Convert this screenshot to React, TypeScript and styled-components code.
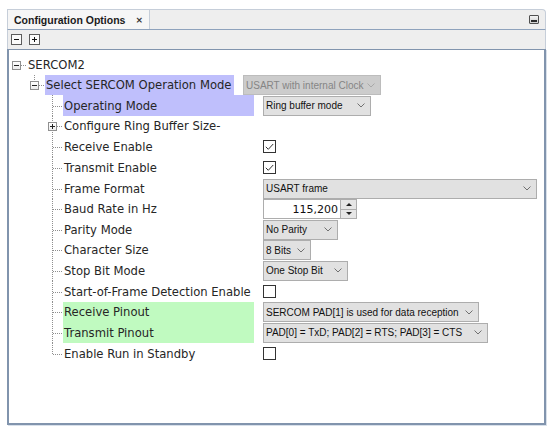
import React from 'react';
import styled, { createGlobalStyle } from 'styled-components';

const Global = createGlobalStyle`
  html, body { margin: 0; padding: 0; background: #ffffff; }
  body { font-family: "DejaVu Sans", sans-serif; }
`;

const Page = styled.div`
  width: 553px;
  height: 434px;
  box-sizing: border-box;
  padding: 9px 0 0 7px;
  background: #ffffff;
`;

const Frame = styled.div`
  width: 539px;
  height: 416px;
  display: flex;
  flex-direction: column;
`;

const TabStrip = styled.div`
  height: 19px;
  display: flex;
  align-items: stretch;
  justify-content: space-between;
  background: #eeeeee;
  border: 1px solid #c6ced9;
  border-bottom: 1px solid #8ea2bc;
  border-top-right-radius: 4px;
`;

const Tab = styled.div`
  display: flex;
  align-items: center;
  gap: 10px;
  padding: 0 6px;
  white-space: nowrap;
  background: #f6f6f6;
  border-right: 1px solid #c6ced9;
  font: bold 10.5px "Liberation Sans", Arial, sans-serif;
  color: #1b1b1b;
`;

const Close = styled.span`
  font: bold 9px "DejaVu Sans", sans-serif;
  color: #333;
`;

const MinBox = styled.div`
  align-self: center;
  margin-right: 6px;
  width: 10px;
  height: 9px;
  box-sizing: border-box;
  border: 1px solid #505050;
  border-radius: 1px;
  background: linear-gradient(#f4f4f4, #cfcfcf);
  display: flex;
  align-items: flex-end;
  justify-content: center;
  padding-bottom: 1px;
  &::after {
    content: "";
    width: 6px;
    height: 2px;
    background: #2a2a2a;
  }
`;

const Toolbar = styled.div`
  height: 19px;
  display: flex;
  align-items: center;
  gap: 7px;
  padding-left: 3px;
  background: #eeeeee;
  border-left: 1px solid #c6ced9;
  border-right: 1px solid #c6ced9;
`;

const ToolButton = styled.div<{ $plus?: boolean }>`
  width: 11px;
  height: 11px;
  box-sizing: border-box;
  border: 1px solid #5c5c5c;
  background: #fbfbfb;
  position: relative;
  &::before {
    content: "";
    position: absolute;
    left: 2px;
    top: 4px;
    width: 5px;
    height: 1px;
    background: #111;
  }
  &::after {
    content: "";
    display: ${(p) => (p.$plus ? 'block' : 'none')};
    position: absolute;
    left: 4px;
    top: 2px;
    width: 1px;
    height: 5px;
    background: #111;
  }
`;

const Content = styled.div`
  flex: 1;
  background: #ffffff;
  border: 2px solid #8194ad;
  border-top: 1px solid #8194ad;
  box-shadow: 1px 1px 0 #d8e0ea;
  padding-top: 5px;
  display: flex;
  flex-direction: column;
`;

const Row = styled.div<{ $h: number }>`
  height: ${(p) => p.$h}px;
  display: flex;
  align-items: stretch;
`;

const Indent = styled.div`
  width: 18px;
  flex: none;
`;

const dots = (dir: string) =>
  `repeating-linear-gradient(${dir}, #8f8f8f 0 1px, transparent 1px 2px)`;

const Branch = styled.div<{ $kind: 'root' | 'mid' | 'last' }>`
  width: 18px;
  flex: none;
  position: relative;
  &::before {
    content: "";
    display: ${(p) => (p.$kind === 'root' ? 'none' : 'block')};
    position: absolute;
    left: 7px;
    top: 0;
    width: 1px;
    height: ${(p) => (p.$kind === 'last' ? '50%' : '100%')};
    background: ${dots('to bottom')};
  }
  &::after {
    content: "";
    position: absolute;
    left: 8px;
    top: 50%;
    width: 9px;
    height: 1px;
    background: ${dots('to right')};
  }
`;

const Expander = styled.div<{ $open: boolean }>`
  position: absolute;
  z-index: 1;
  left: 3px;
  top: calc(50% - 4px);
  width: 9px;
  height: 9px;
  box-sizing: border-box;
  border: 1px solid #909090;
  background: linear-gradient(#ffffff, #ececec);
  &::before {
    content: "";
    position: absolute;
    left: 1px;
    top: 3px;
    width: 5px;
    height: 1px;
    background: #222;
  }
  &::after {
    content: "";
    display: ${(p) => (p.$open ? 'none' : 'block')};
    position: absolute;
    left: 3px;
    top: 1px;
    width: 1px;
    height: 5px;
    background: #222;
  }
`;

const Label = styled.div<{ $w?: number; $hl?: 'blue' | 'green' }>`
  ${(p) => (p.$w ? `width: ${p.$w}px;` : '')}
  flex: none;
  box-sizing: border-box;
  padding: 0 1px;
  display: flex;
  align-items: center;
  white-space: nowrap;
  font: 11.6px "DejaVu Sans", sans-serif;
  color: #262626;
  background: ${(p) =>
    p.$hl === 'blue' ? '#bfbffc' : p.$hl === 'green' ? '#c0fac0' : 'transparent'};
`;

const Value = styled.div`
  margin-left: 9px;
  display: flex;
  align-items: center;
`;

const ComboBox = styled.div<{ $w: number; $disabled?: boolean }>`
  width: ${(p) => p.$w}px;
  height: 20px;
  box-sizing: border-box;
  display: flex;
  align-items: center;
  padding: 0 5px 0 2px;
  border: 1px solid ${(p) => (p.$disabled ? '#bcbcbc' : '#adadad')};
  background: ${(p) => (p.$disabled ? '#cccccc' : '#e1e1e1')};
  color: ${(p) => (p.$disabled ? '#858585' : '#111111')};
  font: 10px "Liberation Sans", Arial, sans-serif;
  white-space: nowrap;
  overflow: hidden;
`;

const ComboText = styled.span`
  flex: 1;
  min-width: 0;
`;

const ChevronWrap = styled.span`
  flex: none;
  display: flex;
  margin-left: 2px;
`;

const Chevron = ({ color }: { color: string }) => (
  <ChevronWrap>
    <svg width="8" height="5" viewBox="0 0 8 5">
      <path d="M0.5 0.5 L4 4 L7.5 0.5" fill="none" stroke={color} strokeWidth="1" />
    </svg>
  </ChevronWrap>
);

const Combo = ({ w, text, disabled }: { w: number; text: string; disabled?: boolean }) => (
  <ComboBox $w={w} $disabled={disabled}>
    <ComboText>{text}</ComboText>
    <Chevron color={disabled ? '#a8a8a8' : '#707070'} />
  </ComboBox>
);

const CheckBox = styled.div`
  width: 13px;
  height: 13px;
  box-sizing: border-box;
  border: 1px solid #333333;
  background: #ffffff;
  display: flex;
  align-items: center;
  justify-content: center;
`;

const Check = ({ on }: { on?: boolean }) => (
  <CheckBox>
    {on && (
      <svg width="9" height="8" viewBox="0 0 9 8">
        <path d="M0.8 3.8 L3.3 6.3 L8.2 1" fill="none" stroke="#333" strokeWidth="1" />
      </svg>
    )}
  </CheckBox>
);

const Spinner = styled.div`
  width: 94px;
  height: 20px;
  box-sizing: border-box;
  display: flex;
  border: 1px solid #adadad;
  background: #ffffff;
`;

const SpinText = styled.div`
  flex: 1;
  display: flex;
  align-items: center;
  justify-content: flex-end;
  padding-right: 2px;
  font: 11px "DejaVu Sans", sans-serif;
  color: #111;
`;

const SpinButtons = styled.div`
  width: 15px;
  display: flex;
  flex-direction: column;
  border-left: 1px solid #adadad;
`;

const SpinButton = styled.div<{ $down?: boolean }>`
  flex: 1;
  display: flex;
  align-items: center;
  justify-content: center;
  background: #e6e6e6;
  border-top: ${(p) => (p.$down ? '1px solid #adadad' : 'none')};
  &::after {
    content: "";
    border-left: 3px solid transparent;
    border-right: 3px solid transparent;
    ${(p) => (p.$down ? 'border-top: 3px solid #222;' : 'border-bottom: 3px solid #222;')}
  }
`;

type Kind = 'root' | 'mid' | 'last';
type Node = {
  label: string;
  level: number;
  kind: Kind;
  h: number;
  exp?: 'open' | 'closed';
  w?: number;
  hl?: 'blue' | 'green';
  value?: React.ReactNode;
};

const L2 = 191;

const nodes: Node[] = [
  { label: 'SERCOM2', level: 0, kind: 'root', h: 20, exp: 'open' },
  {
    label: 'Select SERCOM Operation Mode', level: 1, kind: 'last', h: 20, exp: 'open', w: 189, hl: 'blue',
    value: <Combo w={138} text="USART with internal Clock" disabled />,
  },
  { label: 'Operating Mode', level: 2, kind: 'mid', h: 21, w: L2, hl: 'blue', value: <Combo w={108} text="Ring buffer mode" /> },
  { label: 'Configure Ring Buffer Size-', level: 2, kind: 'mid', h: 20, exp: 'closed', w: L2 },
  { label: 'Receive Enable', level: 2, kind: 'mid', h: 21, w: L2, value: <Check on /> },
  { label: 'Transmit Enable', level: 2, kind: 'mid', h: 21, w: L2, value: <Check on /> },
  { label: 'Frame Format', level: 2, kind: 'mid', h: 21, w: L2, value: <Combo w={274} text="USART frame" /> },
  {
    label: 'Baud Rate in Hz', level: 2, kind: 'mid', h: 20, w: L2,
    value: (
      <Spinner>
        <SpinText>115,200</SpinText>
        <SpinButtons>
          <SpinButton />
          <SpinButton $down />
        </SpinButtons>
      </Spinner>
    ),
  },
  { label: 'Parity Mode', level: 2, kind: 'mid', h: 21, w: L2, value: <Combo w={75} text="No Parity" /> },
  { label: 'Character Size', level: 2, kind: 'mid', h: 20, w: L2, value: <Combo w={48} text="8 Bits" /> },
  { label: 'Stop Bit Mode', level: 2, kind: 'mid', h: 21, w: L2, value: <Combo w={85} text="One Stop Bit" /> },
  { label: 'Start-of-Frame Detection Enable', level: 2, kind: 'mid', h: 21, w: L2, value: <Check /> },
  {
    label: 'Receive Pinout', level: 2, kind: 'mid', h: 20, w: L2, hl: 'green',
    value: <Combo w={216} text="SERCOM PAD[1] is used for data reception" />,
  },
  {
    label: 'Transmit Pinout', level: 2, kind: 'mid', h: 21, w: L2, hl: 'green',
    value: <Combo w={225} text="PAD[0] = TxD; PAD[2] = RTS; PAD[3] = CTS" />,
  },
  { label: 'Enable Run in Standby', level: 2, kind: 'last', h: 21, w: L2, value: <Check /> },
];

const TreeRow = ({ n }: { n: Node }) => (
  <Row $h={n.h}>
    {Array.from({ length: n.level }).map((_, i) => (
      <Indent key={i} />
    ))}
    <Branch $kind={n.kind}>{n.exp && <Expander $open={n.exp === 'open'} />}</Branch>
    <Label $w={n.w} $hl={n.hl}>{n.label}</Label>
    {n.value && <Value>{n.value}</Value>}
  </Row>
);

export default function App() {
  return (
    <>
      <Global />
      <Page>
        <Frame>
          <TabStrip>
            <Tab>
              Configuration Options <Close>×</Close>
            </Tab>
            <MinBox />
          </TabStrip>
          <Toolbar>
            <ToolButton />
            <ToolButton $plus />
          </Toolbar>
          <Content>
            {nodes.map((n) => (
              <TreeRow key={n.label} n={n} />
            ))}
          </Content>
        </Frame>
      </Page>
    </>
  );
}
